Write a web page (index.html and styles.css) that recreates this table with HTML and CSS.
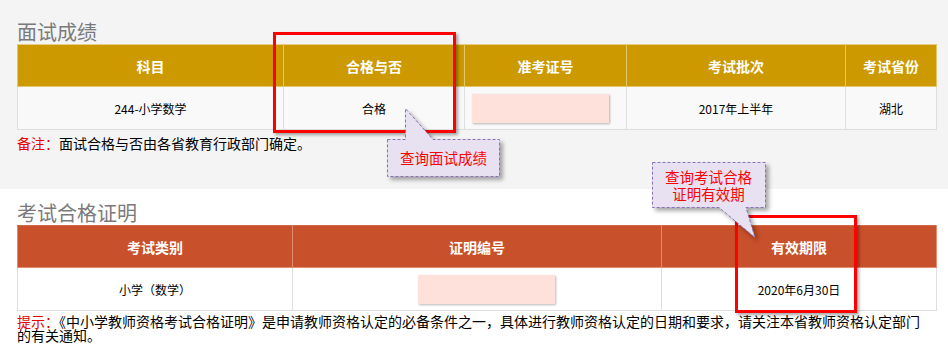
FILE: index.html
```html
<!DOCTYPE html>
<html lang="zh-CN">
<head>
<meta charset="utf-8">
<title>面试成绩</title>
<link rel="stylesheet" href="styles.css">
</head>
<body>
<div class="page">
  <section class="block block-score">
    <h2 class="title">面试成绩</h2>
    <table class="grid grid-gold">
      <colgroup>
        <col class="w266"><col class="w181"><col class="w161"><col class="w219"><col class="w92">
      </colgroup>
      <thead>
        <tr><th>科目</th><th>合格与否</th><th>准考证号</th><th>考试批次</th><th>考试省份</th></tr>
      </thead>
      <tbody>
        <tr>
          <td>244-小学数学</td>
          <td>合格</td>
          <td class="cell-mask"><div class="mask mask-a"></div></td>
          <td>2017年上半年</td>
          <td>湖北</td>
        </tr>
      </tbody>
    </table>
    <p class="note"><span class="label">备注：</span>面试合格与否由各省教育行政部门确定。</p>
  </section>

  <section class="block block-cert">
    <h2 class="title">考试合格证明</h2>
    <table class="grid grid-red">
      <colgroup>
        <col class="w275"><col class="w369"><col class="w275b">
      </colgroup>
      <thead>
        <tr><th>考试类别</th><th>证明编号</th><th>有效期限</th></tr>
      </thead>
      <tbody>
        <tr>
          <td>小学（数学）</td>
          <td class="cell-mask"><div class="mask mask-b"></div></td>
          <td>2020年6月30日</td>
        </tr>
      </tbody>
    </table>
    <p class="tip"><span class="label">提示：</span>《中小学教师资格考试合格证明》是申请教师资格认定的必备条件之一，具体进行教师资格认定的日期和要求，请关注本省教师资格认定部门<br>的有关通知。</p>
  </section>

  <div class="frame frame-a"></div>
  <div class="frame frame-b"></div>

  <div class="callout callout-a">
    <svg class="bubble" width="114" height="70" viewBox="0 0 114 70">
      <path d="M0.5 31.5 L18.5 31.5 L18.5 0.5 L46 31.5 L112.5 31.5 L112.5 68.5 L0.5 68.5 Z"/>
    </svg>
    <div class="callout-text text-a">查询面试成绩</div>
  </div>

  <div class="callout callout-b">
    <svg class="bubble" width="115" height="77" viewBox="0 0 115 77">
      <path d="M0.5 0.5 L113.5 0.5 L113.5 45.5 L94 45.5 L103 75.5 L67 45.5 L0.5 45.5 Z"/>
    </svg>
    <div class="callout-text text-b">查询考试合格<br>证明有效期</div>
  </div>
</div>
</body>
</html>
```

FILE: styles.css
```css
* { box-sizing: border-box; }

html, body {
  margin: 0;
  padding: 0;
  background: #ffffff;
}

body {
  font-family: "Noto Sans CJK SC", "Noto Sans", sans-serif;
  color: #000;
}

.page {
  position: relative;
  width: 948px;
  height: 352px;
  overflow: hidden;
}

.block {
  padding-left: 17px;
}

.block-score {
  background: #f4f4f4;
  padding-top: 20px;
  padding-bottom: 37px;
}

.block-cert {
  background: #ffffff;
  padding-top: 12px;
}

.title {
  margin: 0;
  font-size: 20px;
  line-height: 24px;
  font-weight: normal;
  color: #7a7a7a;
}

.grid {
  width: 919px;
  border-collapse: collapse;
  table-layout: fixed;
}

.w266 { width: 266px; }
.w181 { width: 181px; }
.w161 { width: 162px; }
.w219 { width: 219px; }
.w92  { width: 91px; }

.w275  { width: 275px; }
.w369  { width: 369px; }
.w275b { width: 275px; }

.grid th {
  height: 42px;
  padding: 0;
  font-size: 14px;
  font-weight: bold;
  color: #ffffff;
  text-align: center;
  vertical-align: middle;
}

.grid td {
  height: 43px;
  padding: 0;
  font-size: 12px;
  text-align: center;
  vertical-align: middle;
  border: 1px solid #dedede;
}

.grid-gold th {
  background: #cc9900;
  border: 1px solid #e3c56a;
  border-top-color: #e6cf85;
}

.grid-gold td {
  background: #f9f9f9;
}

.grid-red th {
  background: #c8502a;
  border: 1px solid #e08c6f;
  border-top-color: #cf6a49;
}

.grid-red td {
  background: #ffffff;
}

.cell-mask {
  text-align: left;
}

.mask {
  height: 29px;
  width: 137px;
  background: #ffe1dc;
  box-shadow: 1px 1px 2px rgba(0, 0, 0, 0.28);
}

.mask-a { margin-left: 7px; }
.mask-b { margin-left: 125px; }

.note {
  margin: 4px 0 0;
  font-size: 14px;
  line-height: 18px;
}

.tip {
  margin: 3px 0 0;
  font-size: 14px;
  line-height: 14px;
  white-space: nowrap;
}

.label {
  color: #e60000;
}

.frame {
  position: absolute;
  border: 3px solid #ff0000;
  box-shadow: 2px 2px 3px rgba(0, 0, 0, 0.35);
}

.frame-a {
  left: 273px;
  top: 32px;
  width: 183px;
  height: 101px;
}

.frame-b {
  left: 735px;
  top: 215px;
  width: 122px;
  height: 98px;
}

.callout {
  position: absolute;
}

.callout-a {
  left: 387px;
  top: 108px;
  width: 114px;
  height: 70px;
}

.callout-b {
  left: 652px;
  top: 162px;
  width: 115px;
  height: 77px;
}

.bubble {
  position: absolute;
  left: 0;
  top: 0;
  overflow: visible;
  filter: drop-shadow(3px 3px 2px rgba(0, 0, 0, 0.35));
}

.bubble path {
  fill: #e7e1f1;
  stroke: #8a72b6;
  stroke-width: 1;
  stroke-dasharray: 3 2;
}

.callout-text {
  position: absolute;
  left: 0;
  width: 113px;
  text-align: center;
  color: #ff0000;
  font-size: 14.5px;
}

.text-a {
  top: 31px;
  height: 38px;
  line-height: 38px;
}

.text-b {
  top: 6px;
  line-height: 17px;
}
```
